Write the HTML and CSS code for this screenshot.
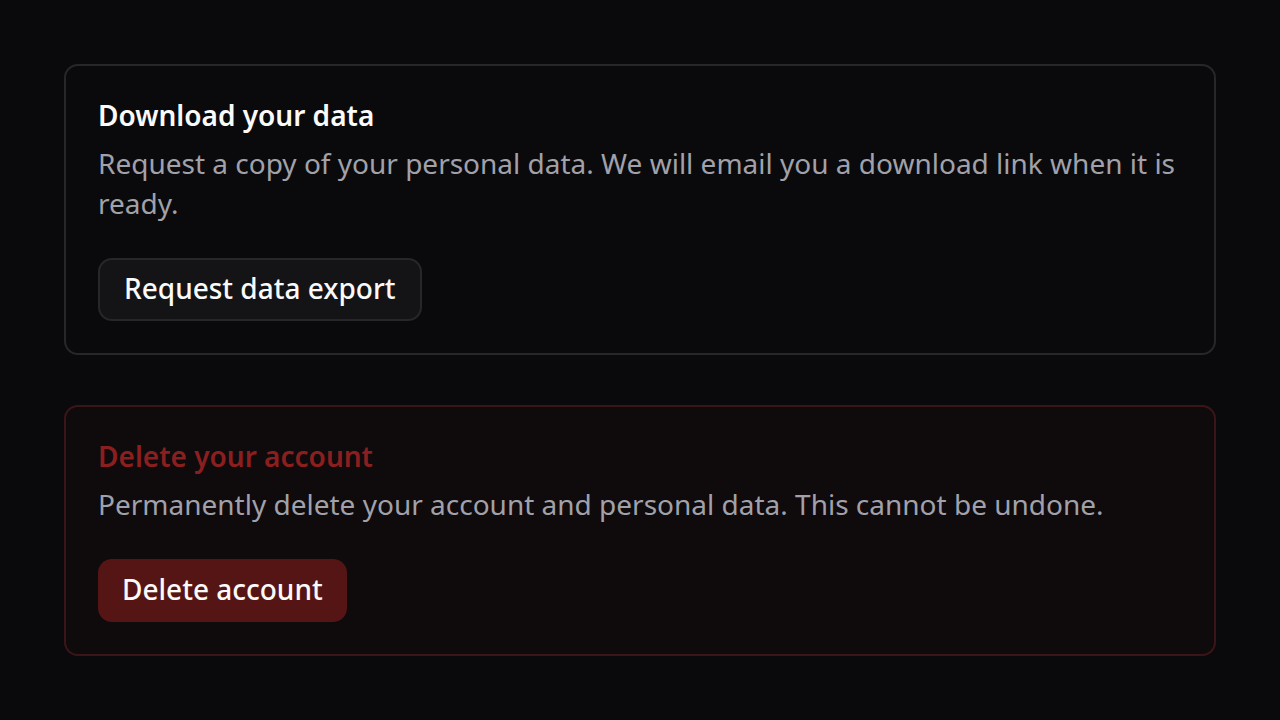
FILE: index.html
```html
<!DOCTYPE html>
<html lang="en">
<head>
<meta charset="utf-8">
<title>Account data</title>
<link rel="stylesheet" href="styles.css">
</head>
<body>
<main class="page">
  <section class="card">
    <h2 class="card-title">Download your data</h2>
    <p class="card-text">Request a copy of your personal data. We will email you a download link when it is ready.</p>
    <button class="btn btn-secondary" type="button">Request data export</button>
  </section>
  <section class="card card-danger">
    <h2 class="card-title title-danger">Delete your account</h2>
    <p class="card-text">Permanently delete your account and personal data. This cannot be undone.</p>
    <button class="btn btn-danger" type="button">Delete account</button>
  </section>
</main>
</body>
</html>
```
FILE: styles.css
```css
* { box-sizing: border-box; }
html, body { margin: 0; padding: 0; }
body {
  background: #0a0a0c;
  font-family: "Noto Sans", "Open Sans", sans-serif;
  color: #f4f4f5;
}
.page {
  padding: 64px;
  display: flex;
  flex-direction: column;
  gap: 50px;
}
.card {
  border: 2px solid #27272a;
  border-radius: 14px;
  background: #0a0a0c;
  padding: 31px 32px 32px;
  display: flex;
  flex-direction: column;
  align-items: flex-start;
}
.card-danger {
  background: #0f0a0b;
  border-color: #3b1518;
}
.card-title {
  margin: 0;
  font-size: 28px;
  line-height: 36px;
  font-weight: 600;
  color: #fafafa;
}
.title-danger { color: #8b1f1f; }
.card-text {
  margin: 10px 0 0;
  font-size: 28px;
  line-height: 40px;
  color: #a1a1aa;
}
.btn {
  margin-top: 35px;
  height: 63px;
  font-family: inherit;
  font-size: 28px;
  font-weight: 500;
  color: #fafafa;
  border-radius: 14px;
  cursor: pointer;
}
.btn-secondary {
  background: #141416;
  border: 2px solid #27272a;
  padding: 0 24px 3px;
}
.btn-danger {
  background: #561515;
  border: none;
  padding: 0 24px 3px;
}
```
